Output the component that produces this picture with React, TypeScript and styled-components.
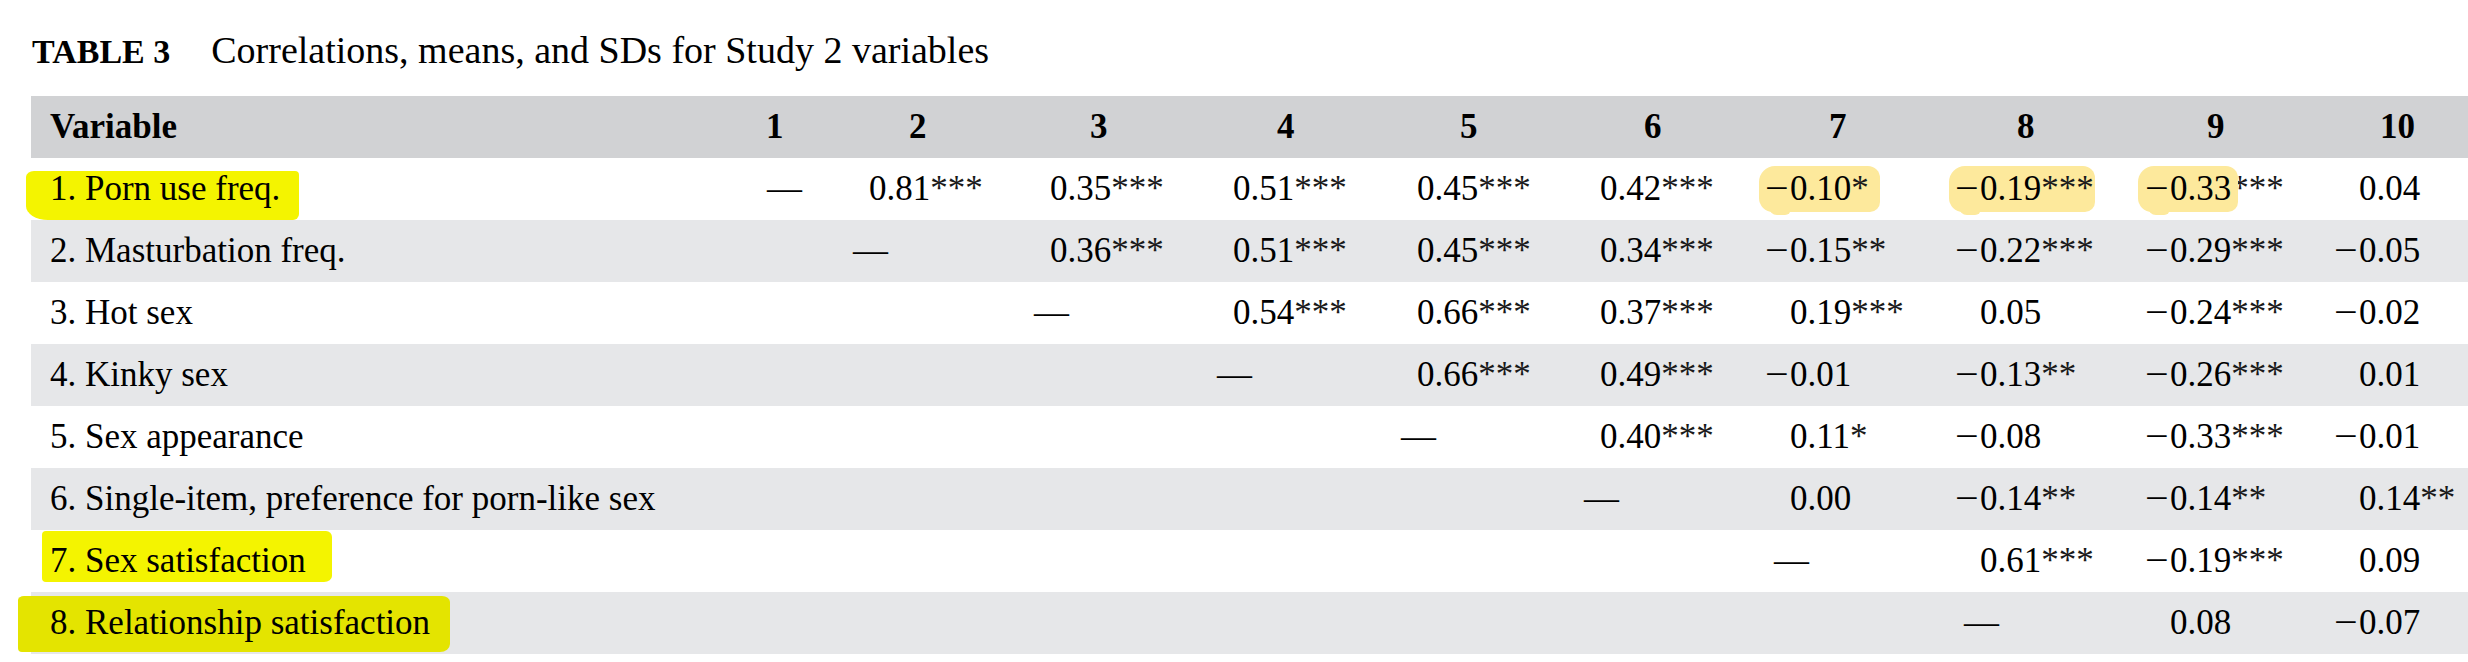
import React from "react";
import styled, { createGlobalStyle } from "styled-components";

const GlobalStyle = createGlobalStyle`
  html, body {
    margin: 0;
    padding: 0;
    background: #ffffff;
    overflow: hidden;
  }
  body {
    font-family: "Liberation Serif", "Times New Roman", serif;
    color: #000000;
  }
`;

const COLS = "672px 143px 162px 184px 185px 184px 184px 187px 188px 186px 182px";
const TABLE_LEFT = 31;
const COL_LEFTS = [703, 846, 1008, 1192, 1377, 1561, 1745, 1932, 2120, 2306];
const HEAD_CENTER = [775, 918, 1099, 1286, 1469, 1653, 1838, 2026, 2216, 2397];
const ZERO_X = [784, 870, 1051, 1234, 1418, 1601, 1791, 1981, 2171, 2360];
const SIGN_SLOT = 23;
const DIGIT = 17.5;

const Page = styled.div`
  width: 2457px;
  padding: 32px 0 0 ${TABLE_LEFT}px;
`;

const Caption = styled.div`
  display: flex;
  align-items: baseline;
  height: 38px;
  line-height: 36px;
  margin-bottom: 26px;
  padding-left: 1px;
`;

const CaptionLabel = styled.span`
  font-weight: 700;
  font-size: 34px;
`;

const CaptionText = styled.span`
  font-size: 38px;
  margin-left: 41px;
`;

const Table = styled.div`
  display: flex;
  flex-direction: column;
`;

const Row = styled.div<{ $tone: string; $bold?: boolean }>`
  display: grid;
  grid-template-columns: ${COLS};
  height: 62px;
  line-height: 62px;
  font-size: 35px;
  font-weight: ${(p) => (p.$bold ? 700 : 400)};
  background: ${(p) => p.$tone};
  white-space: nowrap;
`;

const LabelCell = styled.div`
  padding-left: 19px;
`;

const NumCell = styled.div<{ $pad: number }>`
  padding-left: ${(p) => p.$pad}px;
`;

const Sign = styled.span`
  display: inline-block;
  width: ${SIGN_SLOT}px;
  text-align: right;
  padding-right: 1px;
  box-sizing: border-box;
  transform: scaleX(1.2);
  transform-origin: right center;
`;

const Stars = styled.span`
  color: #1a1a1a;
`;

const Dash = styled.span`
  margin-left: 7px;
`;

type Shape = { t: number; b: number; l: number; r: number; radius: string };

const Marker = styled.span<{ $color: string; $s: Shape }>`
  position: relative;
  z-index: 0;
  &::before {
    content: "";
    position: absolute;
    z-index: -1;
    top: ${(p) => p.$s.t}px;
    bottom: ${(p) => p.$s.b}px;
    left: ${(p) => p.$s.l}px;
    right: ${(p) => p.$s.r}px;
    border-radius: ${(p) => p.$s.radius};
    background: ${(p) => p.$color};
  }
`;

const Pale = styled.span<{ $l: number; $r: number }>`
  position: relative;
  z-index: 0;
  &::before {
    content: "";
    position: absolute;
    z-index: -1;
    top: -3px;
    bottom: -4px;
    left: ${(p) => p.$l}px;
    right: ${(p) => p.$r}px;
    border-radius: 16px 12px 10px 14px;
    background: #fde99c;
  }
  &::after {
    content: "";
    position: absolute;
    z-index: -1;
    bottom: -7px;
    left: ${(p) => p.$l + 10}px;
    width: 22px;
    height: 8px;
    border-radius: 0 0 6px 8px;
    background: #fde99c;
  }
`;

type Hl = "all" | "num";

type RowData = {
  label: string;
  marker?: { color: string; shape: Shape };
  vals: string[];
  hl?: Record<number, { kind: Hl; l: number; r: number }>;
};

const WHITE = "#ffffff";
const GRAY = "#e6e7e9";
const HEAD = "#d1d2d4";

const rows: RowData[] = [
  {
    label: "1. Porn use freq.",
    marker: {
      color: "#f4f400",
      shape: { t: 2, b: -12, l: -24, r: -19, radius: "8px 4px 6px 22px / 6px 4px 6px 14px" },
    },
    vals: ["—", "0.81***", "0.35***", "0.51***", "0.45***", "0.42***", "−0.10*", "−0.19***", "−0.33***", "0.04"],
    hl: {
      6: { kind: "all", l: -8, r: -11 },
      7: { kind: "all", l: -8, r: -1 },
      8: { kind: "num", l: -9, r: -7 },
    },
  },
  {
    label: "2. Masturbation freq.",
    vals: ["", "—", "0.36***", "0.51***", "0.45***", "0.34***", "−0.15**", "−0.22***", "−0.29***", "−0.05"],
  },
  {
    label: "3. Hot sex",
    vals: ["", "", "—", "0.54***", "0.66***", "0.37***", "0.19***", "0.05", "−0.24***", "−0.02"],
  },
  {
    label: "4. Kinky sex",
    vals: ["", "", "", "—", "0.66***", "0.49***", "−0.01", "−0.13**", "−0.26***", "0.01"],
  },
  {
    label: "5. Sex appearance",
    vals: ["", "", "", "", "—", "0.40***", "0.11*", "−0.08", "−0.33***", "−0.01"],
  },
  {
    label: "6. Single-item, preference for porn-like sex",
    vals: ["", "", "", "", "", "—", "0.00", "−0.14**", "−0.14**", "0.14**"],
  },
  {
    label: "7. Sex satisfaction",
    marker: {
      color: "#f4f400",
      shape: { t: -10, b: -2, l: -8, r: -26, radius: "4px 6px 8px 4px / 4px 6px 6px 4px" },
    },
    vals: ["", "", "", "", "", "", "—", "0.61***", "−0.19***", "0.09"],
  },
  {
    label: "8. Relationship satisfaction",
    marker: {
      color: "#e4e400",
      shape: { t: -7, b: -10, l: -32, r: -20, radius: "6px 8px 10px 4px / 4px 6px 8px 4px" },
    },
    vals: ["", "", "", "", "", "", "", "—", "0.08", "−0.07"],
  },
];

function Value({ text, hl }: { text: string; hl?: { kind: Hl; l: number; r: number } }) {
  if (!text) return null;
  if (text === "—") return <Dash>—</Dash>;
  const m = text.match(/^(−?)([0-9.]+)(\**)$/);
  const sign = m ? m[1] : "";
  const num = m ? m[2] : text;
  const stars = m ? m[3] : "";
  const core = (
    <>
      <Sign>{sign}</Sign>
      {num}
    </>
  );
  if (hl && hl.kind === "all") {
    return (
      <Pale $l={hl.l} $r={hl.r}>
        {core}
        {stars && <Stars>{stars}</Stars>}
      </Pale>
    );
  }
  if (hl && hl.kind === "num") {
    return (
      <>
        <Pale $l={hl.l} $r={hl.r}>{core}</Pale>
        {stars && <Stars>{stars}</Stars>}
      </>
    );
  }
  return (
    <>
      {core}
      {stars && <Stars>{stars}</Stars>}
    </>
  );
}

export default function App() {
  const headers = ["1", "2", "3", "4", "5", "6", "7", "8", "9", "10"];
  return (
    <>
      <GlobalStyle />
      <Page>
        <Caption>
          <CaptionLabel>TABLE 3</CaptionLabel>
          <CaptionText>Correlations, means, and SDs for Study 2 variables</CaptionText>
        </Caption>
        <Table>
          <Row $tone={HEAD} $bold>
            <LabelCell>Variable</LabelCell>
            {headers.map((h, i) => (
              <NumCell key={h} $pad={Math.round(HEAD_CENTER[i] - COL_LEFTS[i] - (h.length * DIGIT) / 2)}>
                {h}
              </NumCell>
            ))}
          </Row>
          {rows.map((r, ri) => (
            <Row key={r.label} $tone={ri % 2 === 0 ? WHITE : GRAY}>
              <LabelCell>
                {r.marker ? (
                  <Marker $color={r.marker.color} $s={r.marker.shape}>
                    {r.label}
                  </Marker>
                ) : (
                  r.label
                )}
              </LabelCell>
              {r.vals.map((v, ci) => (
                <NumCell key={ci} $pad={ZERO_X[ci] - 1 - COL_LEFTS[ci] - SIGN_SLOT}>
                  <Value text={v} hl={r.hl ? r.hl[ci] : undefined} />
                </NumCell>
              ))}
            </Row>
          ))}
        </Table>
      </Page>
    </>
  );
}
